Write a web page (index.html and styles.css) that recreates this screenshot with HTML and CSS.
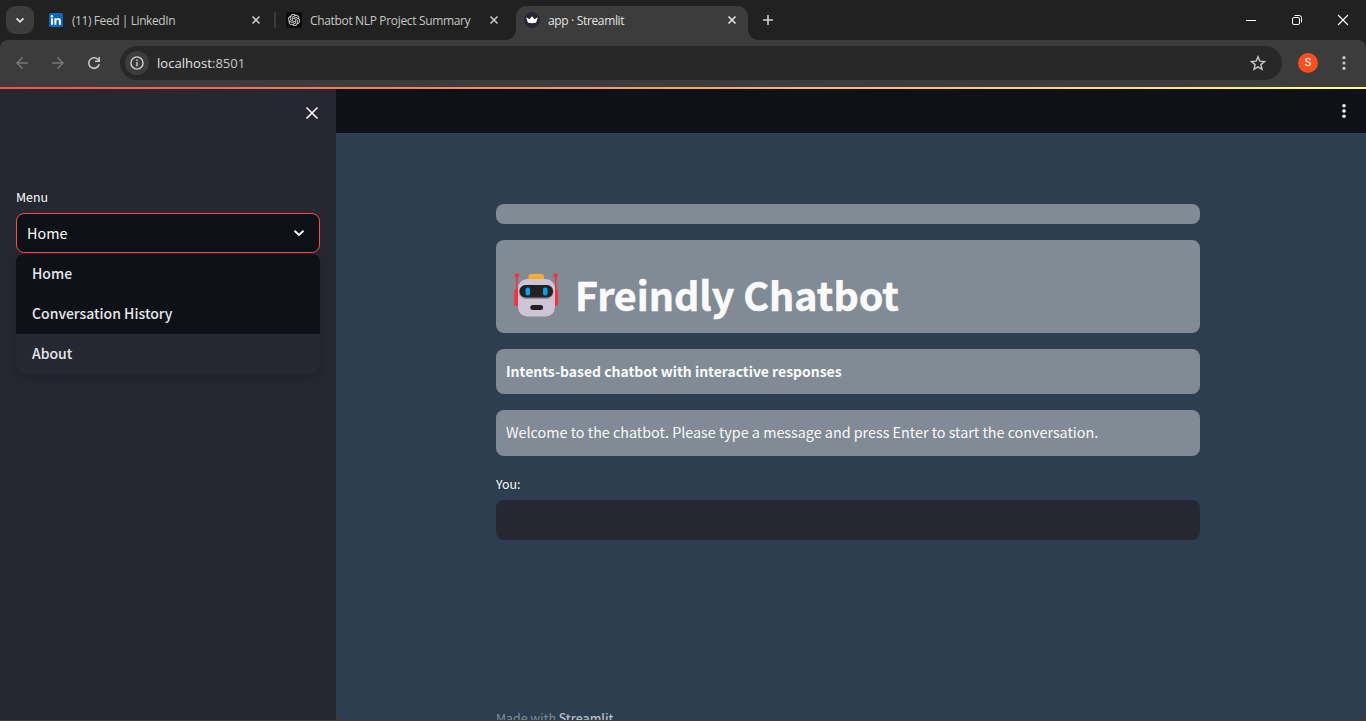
FILE: index.html
```html
<!DOCTYPE html>
<html lang="en">
<head>
<meta charset="utf-8">
<title>app · Streamlit</title>
<link rel="stylesheet" href="styles.css">
</head>
<body>
<div class="window">
  <header class="tabstrip">
    <button class="tab-search" aria-label="Search tabs"><svg width="28" height="28" viewBox="0 0 28 28"><path d="M10.5 12.3l3.5 3.5 3.5-3.5" fill="none" stroke="#e3e3e3" stroke-width="1.8"/></svg></button>
    <div class="tab tab-first">
      <svg class="favicon" width="16" height="16" viewBox="0 0 16 16"><rect x="1" y="1" width="14" height="14" rx="1" fill="#0a66c2"/><g fill="#fff"><circle cx="4" cy="4.2" r="1.2"/><rect x="3" y="6.2" width="2" height="6.5"/><path d="M6.4 6.2h1.9v.9c.5-.8 1.2-1.1 2.1-1.1 1.8 0 2.5 1.2 2.5 3v3.7h-2V9.400c0-1-.3-1.600-1.100-1.600-.9 0-1.400.6-1.400 1.700v3.200h-2z"/></g></svg>
      <span class="tab-title t-feed">(11) Feed | LinkedIn</span>
      <svg class="tab-close" width="16" height="16" viewBox="0 0 16 16"><path d="M4.500 4.500l7 7m0-7l-7 7" stroke="#c7c7c7" stroke-width="1.600"/></svg>
    </div>
    <div class="tab-divider"></div>
    <div class="tab tab-second">
      <svg class="favicon" width="16" height="16" viewBox="0 0 16 16"><rect width="16" height="16" rx="2" fill="#0b0b0b"/><path transform="translate(2 2) scale(.5)" fill="#e0e0e0" stroke="#e0e0e0" stroke-width=".3" d="M22.2819 9.8211a5.9847 5.9847 0 0 0-.5157-4.9108 6.0462 6.0462 0 0 0-6.5098-2.9A6.0651 6.0651 0 0 0 4.9807 4.1818a5.9847 5.9847 0 0 0-3.9977 2.9 6.0462 6.0462 0 0 0 .7427 7.0966 5.98 5.98 0 0 0 .511 4.9107 6.051 6.051 0 0 0 6.5146 2.9001A5.9847 5.9847 0 0 0 13.2599 24a6.0557 6.0557 0 0 0 5.7718-4.2058 5.9894 5.9894 0 0 0 3.9977-2.9001 6.0557 6.0557 0 0 0-.7475-7.0729zm-9.022 12.6081a4.4755 4.4755 0 0 1-2.8764-1.0408l.1419-.0804 4.7783-2.7582a.7948.7948 0 0 0 .3927-.6813v-6.7369l2.02 1.1686a.071.071 0 0 1 .038.052v5.5826a4.504 4.504 0 0 1-4.4945 4.4944zm-9.6607-4.1254a4.4708 4.4708 0 0 1-.5346-3.0137l.142.0852 4.783 2.7582a.7712.7712 0 0 0 .7806 0l5.8428-3.3685v2.3324a.0804.0804 0 0 1-.0332.0615L9.74 19.9502a4.4992 4.4992 0 0 1-6.1408-1.6464zM2.3408 7.8956a4.485 4.485 0 0 1 2.3655-1.9728V11.6a.7664.7664 0 0 0 .3879.6765l5.8144 3.3543-2.0201 1.1685a.0757.0757 0 0 1-.071 0l-4.8303-2.7865A4.504 4.504 0 0 1 2.3408 7.872zm16.5963 3.8558L13.1038 8.364 15.1192 7.2a.0757.0757 0 0 1 .071 0l4.8303 2.7913a4.4944 4.4944 0 0 1-.6765 8.1042v-5.6772a.79.79 0 0 0-.407-.667zm2.0107-3.0231l-.142-.0852-4.7735-2.7818a.7759.7759 0 0 0-.7854 0L9.409 9.2297V6.8974a.0662.0662 0 0 1 .0284-.0615l4.8303-2.7866a4.4992 4.4992 0 0 1 6.6802 4.66zM8.3065 12.863l-2.02-1.1638a.0804.0804 0 0 1-.038-.0567V6.0742a4.4992 4.4992 0 0 1 7.3757-3.4537l-.142.0805L8.704 5.459a.7948.7948 0 0 0-.3927.6813zm1.0976-2.3654l2.602-1.4998 2.6069 1.4998v2.9994l-2.5974 1.4997-2.6067-1.4997Z"/></svg>
      <span class="tab-title t-nlp">Chatbot NLP Project Summary</span>
      <svg class="tab-close" width="16" height="16" viewBox="0 0 16 16"><path d="M4.500 4.500l7 7m0-7l-7 7" stroke="#c7c7c7" stroke-width="1.600"/></svg>
    </div>
    <div class="tab tab-active">
      <svg class="favicon" width="16" height="16" viewBox="0 0 16 16"><circle cx="8" cy="8" r="8" fill="#262730"/><path d="M2 5.300l3.500 1.900L8 4.300l2.500 2.900L14 5.300l-2 5.500q-4 .8-8 0z" fill="#fff"/></svg>
      <span class="tab-title t-app">app · Streamlit</span>
      <svg class="tab-close" width="16" height="16" viewBox="0 0 16 16"><path d="M4.500 4.500l7 7m0-7l-7 7" stroke="#e3e3e3" stroke-width="1.600"/></svg>
    </div>
    <svg class="new-tab" width="16" height="16" viewBox="0 0 16 16"><path d="M8 3v10M3 8h10" stroke="#d0d0d0" stroke-width="1.600"/></svg>
    <div class="window-controls">
      <svg width="46" height="40" viewBox="0 0 46 40"><path d="M18 20.500h10" stroke="#fff"/></svg>
      <svg width="46" height="40" viewBox="0 0 46 40"><g fill="none" stroke="#fff"><rect x="18.500" y="17.500" width="7" height="7" rx="1.500"/><path d="M20.500 15.500h4.800a2.200 2.200 0 0 1 2.200 2.200v4.800"/></g></svg>
      <svg width="46" height="40" viewBox="0 0 46 40"><path d="M18 15l10 10m0-10L18 25" stroke="#fff" stroke-width="1.100"/></svg>
    </div>
  </header>

  <div class="toolbar">
    <svg class="nav" width="36" height="36" viewBox="0 0 36 36"><path d="M24 18H13m5.500-5.500L13 18l5.500 5.500" fill="none" stroke="#777" stroke-width="1.500"/></svg>
    <svg class="nav" width="36" height="36" viewBox="0 0 36 36"><path d="M12 18h11m-5.500-5.500L23 18l-5.500 5.500" fill="none" stroke="#777" stroke-width="1.500"/></svg>
    <svg class="nav" width="36" height="36" viewBox="0 0 36 36"><path d="M23.200 19.300a5.300 5.300 0 1 1-1.200-4.800l1.300 1.400" fill="none" stroke="#c7c7c7" stroke-width="1.600"/><path d="M24 12v5h-5v-1.500h3.500V12z" fill="#c7c7c7"/></svg>
    <div class="omnibox">
      <svg class="site-info" width="24" height="24" viewBox="0 0 24 24"><circle cx="12" cy="12" r="12" fill="#3c3c3c"/><circle cx="12" cy="12" r="6.100" fill="none" stroke="#d0d0d0" stroke-width="1.400"/><path d="M12 11v4.200M12 8.500v1.500" stroke="#d0d0d0" stroke-width="1.400"/></svg>
      <span class="url">localhost<span class="port">:8501</span></span>
      <svg class="star" width="16" height="16" viewBox="0 0 16 16"><path d="M8 1.800l1.800 4.300 4.700.4-3.600 3.100 1.100 4.600L8 11.800l-4 2.400 1.100-4.600-3.600-3.100 4.700-.4z" fill="none" stroke="#c7c7c7" stroke-width="1.400"/></svg>
    </div>
    <div class="avatar">S</div>
    <svg class="browser-menu" width="16" height="16" viewBox="0 0 16 16" fill="#c7c7c7"><circle cx="8" cy="2.700" r="1.600"/><circle cx="8" cy="8" r="1.600"/><circle cx="8" cy="13.300" r="1.600"/></svg>
  </div>

  <div class="decoration"></div>

  <div class="app">
    <aside class="sidebar">
      <svg class="sidebar-close" width="20" height="20" viewBox="0 0 20 20"><path d="M4.500 4.500l11 11m0-11l-11 11" stroke="#fafafa" stroke-width="1.600"/></svg>
      <label class="field-label menu-label"><span class="tx">Menu</span></label>
      <div class="select"><span class="tx">Home</span><svg width="20" height="20" viewBox="0 0 20 20"><path d="M5.500 7.700l4.500 4.200 4.500-4.200" fill="none" stroke="#fafafa" stroke-width="2"/></svg></div>
      <ul class="options">
        <li><span class="tx">Home</span></li>
        <li><span class="tx">Conversation History</span></li>
        <li class="hovered"><span class="tx">About</span></li>
      </ul>
    </aside>
    <main class="main">
      <div class="app-header"><svg width="16" height="16" viewBox="0 0 16 16" fill="#fafafa"><circle cx="8" cy="2.800" r="1.800"/><circle cx="8" cy="8" r="1.800"/><circle cx="8" cy="13.200" r="1.800"/></svg></div>
      <div class="content">
        <div class="block block-empty"></div>
        <div class="block block-title">
          <svg class="robot" width="50" height="50" viewBox="0 0 50 50"><g fill="#f92f40"><circle cx="6" cy="6.500" r="2.300"/><circle cx="44.500" cy="6.500" r="2.300"/><rect x="5" y="7" width="1.600" height="17"/><rect x="44" y="7" width="1.600" height="17"/><rect x="3.300" y="20" width="5" height="17" rx="2.500"/><rect x="42" y="20" width="5" height="17" rx="2.500"/></g><path d="M17.500 11V8q0-3 3-3h9.500q3 0 3 3v3z" fill="#ffaa2c"/><rect x="7" y="10" width="37" height="37.500" rx="9" fill="#cdc4d6"/><rect x="8" y="16" width="34.500" height="14" rx="7" fill="#998ea4"/><rect x="8.500" y="16" width="33.500" height="12.500" rx="6.250" fill="#212121"/><rect x="14.500" y="18.500" width="4.500" height="8" rx="2" fill="#00a6ed"/><rect x="32" y="18.500" width="4.500" height="8" rx="2" fill="#00a6ed"/><rect x="19.300" y="36" width="12.800" height="5" rx="2.500" fill="#212121"/></svg>
          <h1><span class="tx">Freindly Chatbot</span></h1>
        </div>
        <div class="block block-intro"><span class="tx">Intents-based chatbot with interactive responses</span></div>
        <div class="block block-welcome"><span class="tx">Welcome to the chatbot. Please type a message and press Enter to start the conversation.</span></div>
        <label class="field-label you-label"><span class="tx">You:</span></label>
        <input class="message" type="text" aria-label="You">
        <footer class="footer"><span class="tx">Made with <b>Streamlit</b></span></footer>
      </div>
    </main>
  </div>
</div>
</body>
</html>
```
FILE: styles.css
```css
* { box-sizing: border-box; }
body { margin: 0; background: #3c3c3c; overflow: hidden; }
svg { display: block; flex: none; }
.window { width: 1366px; height: 721px; display: flex; flex-direction: column; background: #3c3c3c; font-family: "Noto Sans CJK SC", sans-serif; color: #fafafa; overflow: hidden; }

.tabstrip { height: 40px; flex: none; display: flex; align-items: center; background: #202120; font-family: "Open Sans", "Noto Sans", sans-serif; box-shadow: 0 8px 0 #202120; }
.tab-search { width: 28px; height: 28px; margin-left: 6px; padding: 0; border: 0; border-radius: 9px; background: #3c3c3c; }
.tab { display: flex; align-items: center; height: 40px; }
.tab-first { width: 216px; margin-left: 14px; }
.tab-divider { width: 2px; height: 16px; margin-left: 10px; background: #3c3c3c; }
.tab-second { width: 216px; margin-left: 10px; }
.tab-active { position: relative; width: 232px; height: 34px; margin: 6px 0 0 14px; padding: 0 8px; background: #3c3c3c; border-radius: 10px 10px 0 0; }
.tab-active .favicon, .tab-active .tab-close { margin-top: -6px; }
.tab-active::before, .tab-active::after { content: ""; position: absolute; bottom: 0; width: 10px; height: 10px; }
.tab-active::before { left: -10px; background: radial-gradient(circle at 0 0, #202120 9.500px, #3c3c3c 10px); }
.tab-active::after { right: -10px; background: radial-gradient(circle at 100% 0, #202120 9.500px, #3c3c3c 10px); }
.tab-title { margin-left: 8px; padding-top: 1px; font-size: 12px; line-height: 16px; color: #c7c7c7; white-space: nowrap; }
.t-feed { letter-spacing: -.42px; }
.t-nlp { letter-spacing: -.34px; }
.t-app { letter-spacing: -.34px; }
.tab-active .tab-title { margin-top: -6px; color: #e3e3e3; }
.tab-close { margin-left: auto; }
.new-tab { margin-left: 12px; }
.window-controls { display: flex; margin-left: auto; }

.toolbar { height: 47px; flex: none; display: flex; align-items: center; padding: 0 14px 1px 4px; background: #3c3c3c; border-radius: 8px 8px 0 0; position: relative; font-family: "Open Sans", "Noto Sans", sans-serif; }
.omnibox { display: flex; align-items: center; width: 1162px; height: 34px; margin-left: 8px; padding: 0 16px 0 5px; background: #282828; border-radius: 17px; }
.url { margin-left: 8px; font-size: 13px; line-height: 20px; color: #e3e3e3; letter-spacing: .05px; }
.port { color: #c7c7c7; }
.star { margin-left: auto; }
.avatar { width: 20px; height: 20px; margin-left: 16px; border-radius: 50%; background: #f4511e; color: #fff; font: 11px/20px Roboto, sans-serif; text-align: center; }
.browser-menu { margin-left: auto; }

.decoration { height: 2px; flex: none; background: linear-gradient(90deg, #ff4b4b, #fffd80); position: relative; }
.app { height: 631px; flex: none; display: flex; overflow: hidden; }

.sidebar { width: 336px; flex: none; display: flex; flex-direction: column; padding: 14px 16px 0; background: #262730; }
.sidebar-close { align-self: flex-end; margin-right: -2px; }
.tx { white-space: nowrap; }
.field-label { font-size: 12.400px; line-height: 20px; }
.menu-label { margin-top: 64px; }
.select { display: flex; align-items: center; justify-content: space-between; height: 40px; margin-top: 6px; padding: 0 10px; border: 1px solid #ff4b4b; border-radius: 8px; background: #0e1117; font-size: 14.350px; line-height: 24px; }
.options { list-style: none; margin: 1px 0 0; padding: 0; border-radius: 8px; overflow: hidden; background: #0e1117; box-shadow: 0 4px 16px rgba(0, 0, 0, .16); font-size: 14px; font-weight: 500; color: #e8e8ea; }
.options li { height: 40px; padding: 0 16px; line-height: 38px; }
.options .hovered { background: #262730; }

.main { flex: 1; display: flex; flex-direction: column; background: #2c3e50; border-radius: 0 0 8px 8px; overflow: hidden; }
.app-header { height: 44px; flex: none; display: flex; align-items: center; justify-content: flex-end; padding-right: 14px; background: #0e1117; }
.content { width: 704px; margin: 71px 0 0 160px; display: flex; flex-direction: column; }
.block { flex: none; margin-bottom: 16px; padding: 0 10px 2px; border-radius: 8px; background: #808b95; display: flex; align-items: center; font-size: 14.340px; line-height: 24px; }
.block-empty { height: 20px; }
.block-title { height: 93px; padding: 15px 15px 0; }
.block-title h1 { margin: 0 0 0 14px; font-size: 39.400px; line-height: 52px; font-weight: 700; -webkit-text-stroke: .5px #fafafa; }
.block-intro { height: 45px; font-size: 13.950px; font-weight: 700; }
.block-welcome { height: 46px; }
.you-label { margin-top: 2px; }
.message { height: 40px; flex: none; margin-top: 6px; border: 0; border-radius: 8px; background: #262730; color: #fafafa; }
.footer { flex: none; margin-top: 168px; font-size: 12.400px; line-height: 20px; color: #808b95; }
.footer b { font-weight: 500; color: #b6bdc4; }
```
